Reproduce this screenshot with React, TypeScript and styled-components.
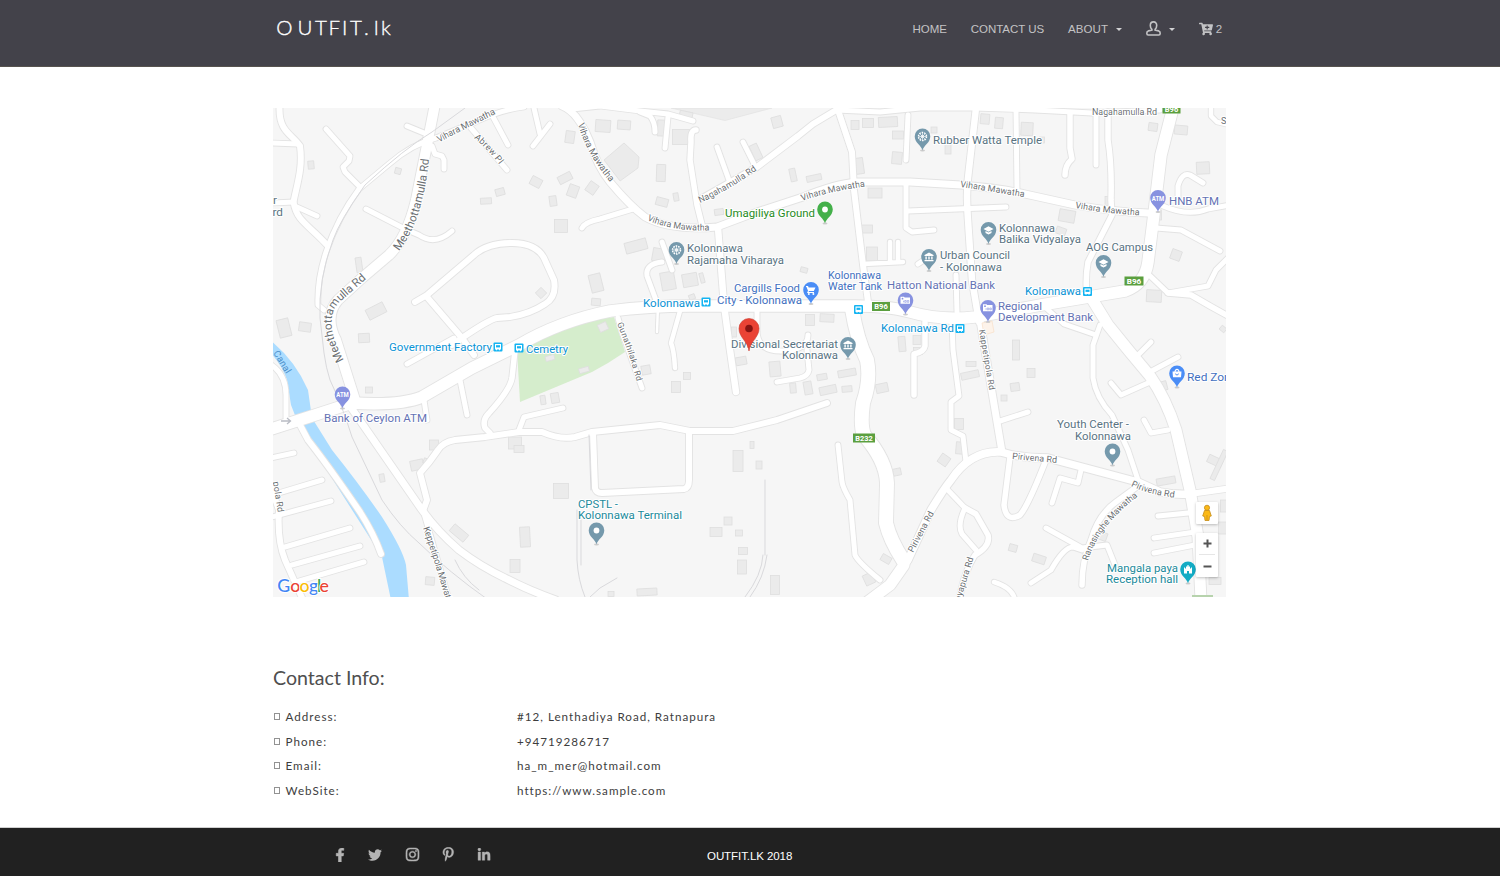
import React from 'react';
import styled, { createGlobalStyle } from 'styled-components';
import { FaFacebookF, FaTwitter, FaInstagram, FaPinterestP, FaLinkedinIn, FaCartPlus } from 'react-icons/fa';

const GlobalStyle = createGlobalStyle`
  *, *::before, *::after { box-sizing: border-box; }
  body { margin: 0; background: #fff; font-family: Lato, sans-serif; color: #444; }
`;

const Page = styled.div`
  display: flex;
  flex-direction: column;
  height: 876px;
  overflow: hidden;
`;

const Header = styled.header`
  flex: none;
  height: 67px;
  background: #43424a;
  border-bottom: 1px solid #57534f;
`;

const Container = styled.div`
  width: 954px;
  margin-left: 273px;
`;

const HeaderRow = styled(Container)`
  display: flex;
  justify-content: space-between;
  align-items: flex-start;
`;

const Logo = styled.svg`
  display: block;
  margin-top: 14px;
  font-family: Lato, sans-serif;
  font-size: 20.5px;
  font-weight: 300;
`;

const Nav = styled.nav`
  display: flex;
  align-items: center;
  padding: 19px 5px 0 0;
`;

const NavLink = styled.a<{ $gap: number; $lift?: number; $tracking?: number }>`
  display: flex;
  align-items: center;
  height: 20px;
  margin-left: ${p => p.$gap}px;
  margin-top: ${p => -(p.$lift ?? 0)}px;
  font: 11.5px/20px 'Liberation Sans', Arial, sans-serif;
  letter-spacing: ${p => p.$tracking ?? -0.05}px;
  color: #c3c3c5;
  white-space: nowrap;
`;

const CartIcon = styled(FaCartPlus)`
  margin-right: 2.5px;
`;

const Caret = styled.span`
  margin-left: 8px;
  margin-top: 2px;
  border: 3px solid transparent;
  border-top-color: #d2d2d4;
  border-bottom: 0;
`;

const Main = styled.main`
  flex: 1;
  padding-top: 41px;
`;

const MapFrame = styled.div`
  position: relative;
  width: 953px;
  height: 489px;
  background: #f6f6f6;
  overflow: hidden;
`;

const MapCanvas = styled.svg`
  display: block;
  font-family: Roboto, sans-serif;
`;

const ControlStack = styled.div`
  position: absolute;
  right: 8px;
  bottom: 20px;
  display: flex;
  flex-direction: column;
  gap: 9px;
`;

const ControlBox = styled.div`
  width: 22px;
  background: #fff;
  border-radius: 1px;
  box-shadow: 0 1px 3px rgba(0, 0, 0, 0.25);
  display: flex;
  flex-direction: column;
  align-items: center;
`;

const ControlButton = styled.button<{ $divided?: boolean }>`
  width: 16px;
  height: 22px;
  padding: 0;
  border: 0;
  border-bottom: ${p => (p.$divided ? '1px solid #e6e6e6' : '0')};
  background: none;
  display: flex;
  align-items: center;
  justify-content: center;
`;

const ContactSection = styled.section`
  padding-top: 67px;
`;

const SectionTitle = styled.h2`
  margin: 0 0 12.6px;
  font-size: 19.6px;
  line-height: 28px;
  font-weight: 400;
  color: #4f4f4f;
`;

const InfoRow = styled.div`
  display: grid;
  grid-template-columns: 244px 1fr;
  height: 24.5px;
  align-items: center;
  font-size: 11.65px;
  letter-spacing: 1px;
  color: #3d3d3d;
`;

const InfoLabel = styled.span`
  display: flex;
  align-items: center;
`;

const GlyphBox = styled.i`
  width: 6px;
  height: 7px;
  margin: 0 5.5px 0 1px;
  border: 1px solid #929292;
`;

const Footer = styled.footer`
  flex: none;
  height: 49px;
  background: #212121;
  border-top: 1px solid #d0d0d0;
`;

const FooterRow = styled(Container)`
  display: flex;
  align-items: center;
  height: 48px;
  padding: 7px 0 0 60px;
`;

const Socials = styled.div`
  display: flex;
  align-items: center;
  width: 374px;
  padding-bottom: 2px;
  color: #b4b4b4;
`;

const SocialLink = styled.a<{ $width: number; $weight?: number }>`
  display: flex;
  justify-content: center;
  width: ${p => p.$width}px;
  svg { stroke-width: ${p => p.$weight ?? 0}; }
`;

const Copyright = styled.span`
  font: 11.55px/16px 'Liberation Sans', Arial, sans-serif;
  letter-spacing: -0.1px;
  color: #fff;
`;

type Road = [string, number];

const roads: Road[] = [
  ['M279.500 108C279 132 292 134 300 146C303 168 297 184 293.500 202C297 222 308 224 327 245', 6],
  ['M272 143L298 144', 5],
  ['M272 203L294 202', 5],
  ['M297 207L317 216', 5],
  ['M326 129L350 156L349 161L343 167L345 172L360 187', 5],
  ['M524 107Q500 110 475 122L436 138Q412 144 389 164L359 189Q338 217 326 252Q317 280 318 305L324 310', 5],
  ['M407 126L424 133', 5],
  ['M432 146L435 154L442 156L444 160V169', 5],
  ['M366 209L405 229L419 235Q435 246 452 231', 5],
  ['M471 128L507 170', 5],
  ['M492 115L508 145', 5],
  ['M534 108L540 134M550 124L533 146', 5],
  ['M415 302L427 295L474 255Q487 243 512 243Q536 243 544 258L554 280Q557 297 545 304Q530 314 510 317L497 318Q490 319 462 338L452 345', 6],
  ['M427 297L462 338L474 355', 6],
  ['M454 338L407 364', 5],
  ['M562 106Q578 112 590 142Q597 166 610 182Q630 206 645 217Q670 231 717 227L757 212L803 197Q835 184 857 182H910L961 185Q1000 188 1025 194L1075 205Q1115 212 1148 213', 7],
  ['M572 109L600 106L640 111L668 114L693 121', 5],
  ['M640 112L650 116Q655 122 655 132', 5],
  ['M668 117L665 148', 5],
  ['M696 130Q690 130 691 142L690 160L697 205L702 225', 5.500],
  ['M717 147L730 183M743 142L756 168', 5],
  ['M697 201L757 167L798 136L813 124L838 109', 6],
  ['M836 110L880 112L920 108H975L1035 110L1092 113L1160 110', 5],
  ['M838 110L852 152L854 190L863 265L868 302', 6],
  ['M908 115L906 160M906 184V228L912 232L934 230', 5],
  ['M863 264L903 262M890 242V262M898 242V262', 4.500],
  ['M582 228Q585 222 600 219L633 209', 5],
  ['M662 242L672 270', 5],
  ['M662 262Q645 264 647 276L657 303', 5],
  ['M658 305L657 332', 2.500],
  ['M718 228L724 305L730 350L736 392', 6.500],
  ['M680 311L671 343Q674 350 675 368', 4.500],
  ['M618 318L622 332L642 388', 5],
  ['M757 312V330Q757 352 783 351Q808 350 808 335M807 350L809 370Q808 376 800 378L777 382', 5],
  ['M838 445L842 482Q843 488 850 500L855 555Q858 562 880 580', 5],
  ['M423 511L427 500L420 473Q430 462 438 450Q443 442 455 440L485 437L519 432H542Q560 440 575 437L592 432L660 425L690 431H733L777 420L827 403', 6],
  ['M593 432L595 488Q596 493 602 493L684 489Q689 488 689 480V431', 6],
  ['M515 350L512 378Q510 390 489 413Q482 420 485 428L490 433', 5.500],
  ['M519 430L524 417L563 408', 5],
  ['M460 380L467 415M424 400L427 420', 5],
  ['M350 406L422 510Q438 532 459 550Q480 566 505 578Q530 591 556 600', 7],
  ['M423 510L449 600', 5],
  ['M300 425L308 440Q330 468 360 512Q374 534 381 554', 6],
  ['M270 364Q286 374 286 395V418', 5],
  ['M271 458L294 453M272 495L322 480M272 517L331 501', 5],
  ['M270 485L279 510Q277 540 285 560L303 600', 6],
  ['M285 547L350 528M292 565L360 546M296 582L364 562', 5],
  ['M976 108L968 178Q966 195 968 220L972 280L979 322', 6.500],
  ['M1016 110L1017 190', 5],
  ['M1070 113V148L1072 159Q1065 165 1065 175', 5.500],
  ['M1096 112V165', 5],
  ['M1108 112V140Q1112 165 1111 200L1112 215L1088 262Q1085 278 1087 300', 5.500],
  ['M908 211L1006 207', 5],
  ['M1163 206Q1188 217 1208 209L1230 205', 5],
  ['M1156 228L1181 230L1220 251', 5],
  ['M1178 200V186Q1182 172 1190 175L1203 183', 5],
  ['M1147 273L1168 293L1208 286L1216 270L1230 256', 5],
  ['M1168 293L1191 295L1210 306L1230 317', 5.500],
  ['M1211 105V116L1217 122L1230 125', 4.500],
  ['M918 264L924 260M956 275L957 312', 5],
  ['M925 322V346Q924 352 914 354V395', 5.500],
  ['M952 322L953 350L959 396L951 402V430L963 436L966 462', 5],
  ['M980 320L985 350L1002 452', 7],
  ['M1000 421L1028 412', 5],
  ['M1046 308L1064 324L1096 335', 5],
  ['M1100 325L1093 345V378Q1096 398 1112 415L1128 450L1138 480', 5],
  ['M1151 342L1137 356M1178 357L1148 373', 5],
  ['M1111 383L1121 395L1148 383', 5],
  ['M1144 420L1151 433L1168 430', 5],
  ['M945 487L965 508Q957 525 962 534L976 550', 5],
  ['M965 508L976 514L988 535Q991 546 975 555Q965 570 959 600', 5.500],
  ['M1010 457L1004 505Q1006 523 1020 515Q1028 506 1046 460', 5.500],
  ['M1081 470L1078 483L1060 478L1052 503', 5],
  ['M1138 486L1116 502Q1098 515 1091 540Q1082 560 1082 585', 5.500],
  ['M1046 528L1082 548L1107 545L1115 565', 5],
  ['M1031 583L1051 570Q1064 547 1073 547L1082 550', 5],
  ['M994 582Q1013 588 1015 600', 4.500],
  ['M1158 516L1188 513M1154 538L1195 532M1154 553L1195 545', 5],
  ['M1190 494L1232 488', 6],
  ['M355 400L336 340Q324 316 338 300L362 278L389 255Q407 238 416 200L427 145L435 104', 10],
  ['M268 430L312 416L352 403Q400 406 422 397L472 368L519 345Q560 321 610 311Q650 306 690 306H855Q890 306 910 312Q941 321 975 317L1041 305L1125 291Q1145 284 1148 262L1153 222L1161 155L1174 104', 11.500],
  ['M1092 299L1108 325Q1128 350 1150 376Q1166 399 1176 430L1190 490L1198 537L1201 600', 11],
  ['M852 309Q857 340 867 360Q871 380 863 403Q860 425 864 435Q886 460 887 483L886 523Q890 540 903 560', 14],
  ['M866 602L890 585L908 560L931 510Q943 490 951 480Q971 450 1001 452Q1020 458 1048 458L1138 482L1160 492Q1175 495 1190 494', 7.500],
  ['M866 603L890 585L904 565', 11],
];

// [centre x, centre y, width, height, rotation]
const buildings: number[][] = [
  [311, 165, 6, 8, -5], [398, 171, 6, 6, 15], [486, 201, 11, 6, -3], [500, 192, 9, 7, -15],
  [536, 182, 11, 9, 28], [565, 178, 14, 8, -27], [573, 191, 10, 12, 20], [553, 201, 7, 10, -8],
  [561, 226, 13, 13, 0], [570, 137, 9, 12, 8], [359, 265, 6, 15, -8], [376, 311, 19, 11, -27],
  [284, 328, 12, 18, -14], [305, 327, 12, 9, 8], [364, 338, 11, 9, -3], [541, 293, 8, 8, 45],
  [592, 188, 10, 11, 35], [603, 126, 15, 12, 4], [624, 125, 13, 9, 4], [661, 128, 7, 16, 2],
  [681, 137, 17, 15, 0], [686, 115, 13, 7, 12], [661, 173, 9, 17, 2], [662, 202, 12, 8, 15],
  [676, 197, 5, 8, -10], [719, 212, 9, 6, -8], [777, 122, 10, 11, -15], [756, 152, 8, 16, -25],
  [793, 175, 6, 13, -12], [814, 178, 15, 6, -12], [636, 246, 22, 11, -15], [659, 255, 13, 13, 10],
  [596, 283, 12, 18, -14], [596, 302, 9, 7, 5], [668, 281, 14, 18, -10], [690, 280, 15, 13, -10],
  [702, 278, 4, 10, -15], [692, 297, 6, 5, -20], [855, 125, 8, 9, 0], [868, 123, 11, 9, 0],
  [888, 122, 19, 10, -3], [898, 135, 11, 8, 0], [897, 158, 10, 12, 5], [859, 166, 9, 16, -8],
  [875, 193, 14, 10, 0], [866, 229, 13, 8, 0], [872, 254, 11, 14, 0], [804, 270, 7, 5, 15],
  [810, 320, 9, 11, 0], [827, 318, 14, 8, 3], [734, 332, 5, 10, 0], [902, 344, 7, 15, -5],
  [985, 119, 9, 10, 5], [999, 123, 8, 11, 5], [1027, 129, 12, 13, 3], [934, 130, 6, 6, 0],
  [948, 149, 6, 10, 0], [1042, 140, 5, 6, 0], [1067, 216, 16, 12, 10], [1061, 231, 10, 7, 20],
  [1108, 201, 6, 9, 0], [1153, 127, 9, 8, 8], [1181, 130, 13, 9, 5], [1203, 168, 13, 12, -3],
  [1158, 215, 7, 10, 0], [1176, 255, 10, 10, 20], [1154, 296, 15, 12, 3], [1223, 329, 6, 5, 40],
  [917, 340, 8, 9, 0], [918, 351, 9, 7, 0], [1016, 350, 7, 20, 0], [971, 364, 10, 5, 0],
  [970, 375, 18, 7, -12], [1031, 373, 8, 9, 0], [1015, 387, 9, 8, -8], [1004, 398, 6, 6, 0],
  [959, 424, 9, 11, 0], [960, 448, 8, 12, 5], [944, 460, 10, 10, 35], [1163, 386, 8, 9, -15],
  [1166, 481, 19, 7, -10], [1102, 536, 10, 8, 20], [1013, 548, 8, 7, 15], [1039, 559, 13, 8, 18],
  [1215, 461, 15, 8, 25], [1219, 465, 5, 32, 25], [1224, 506, 7, 12, 0], [1223, 528, 9, 12, 0],
  [1215, 581, 12, 7, 0], [369, 390, 7, 6, 0], [434, 445, 9, 10, 0], [417, 465, 13, 10, -12],
  [426, 461, 5, 5, 20], [382, 478, 5, 8, -10], [515, 443, 13, 12, 0], [519, 449, 10, 7, 0],
  [561, 491, 15, 15, 0], [525, 537, 10, 20, -3], [459, 533, 18, 9, 40], [515, 566, 10, 13, 0],
  [430, 581, 9, 8, 5], [543, 400, 5, 9, -8], [555, 398, 8, 10, -10], [550, 358, 9, 5, -15],
  [584, 370, 10, 5, -15], [646, 370, 9, 9, -10], [676, 387, 9, 11, 0], [687, 376, 7, 7, 0],
  [741, 361, 11, 8, -10], [775, 369, 11, 15, -5], [793, 388, 6, 10, -5], [808, 388, 8, 13, -10],
  [822, 377, 10, 6, -10], [847, 373, 18, 7, -10], [828, 390, 17, 8, -12], [847, 389, 10, 6, -5],
  [882, 388, 12, 9, -12], [897, 472, 8, 7, -12], [738, 461, 10, 21, 0], [752, 445, 4, 7, 0],
  [759, 465, 6, 8, 0], [716, 532, 12, 9, 0], [728, 521, 8, 8, 0], [739, 533, 7, 6, 0],
  [743, 551, 9, 7, 0], [742, 567, 9, 14, 0], [775, 585, 9, 19, 0], [647, 592, 20, 7, -3],
  [611, 594, 6, 5, 0], [886, 559, 10, 7, 30], [869, 579, 10, 11, -25], [603, 327, 9, 8, -25],
];

const rails = [
  'M465 108L432 132Q405 148 365 185Q340 220 333 240Q318 280 320 318L324 353Q326 368 330 380Q342 405 352 437L382 500Q400 527 419 543Q450 573 487 599',
  'M765 480V555M763 555Q762 575 745 597M767 555Q764 578 750 597',
  'M577 510V560Q578 580 585 597M581 520V565M617 578L600 588L590 597',
  'M589 435L591 490',
  'M455 560Q463 578 479 590',
];

// [text, x, baseline, width, colour]
type PlaceLabel = [string, number, number, number, string];
const SLATE = '#597382';
const TRANSIT = '#0a93d5';
const BANK = '#6472b4';
const SHOP = '#3f70c0';
const TEAL = '#1b8a9b';

const placeLabels: PlaceLabel[] = [
  ['Rubber Watta Temple', 933, 144.300, 109, SLATE],
  ['HNB ATM', 1169, 205.300, 50, BANK],
  ['Kolonnawa', 999, 231.700, 56, SLATE],
  ['Balika Vidyalaya', 999, 243, 82, SLATE],
  ['AOG Campus', 1086, 251.300, 67, SLATE],
  ['Urban Council', 940, 259.300, 70, SLATE],
  ['- Kolonnawa', 940, 270.700, 62, SLATE],
  ['Kolonnawa', 828, 278.700, 53, SHOP],
  ['Water Tank', 828, 290, 54, SHOP],
  ['Hatton National Bank', 887, 288.700, 108, BANK],
  ['Regional', 998, 310, 44, BANK],
  ['Development Bank', 998, 321.300, 95, BANK],
  ['Kolonnawa', 1025, 295.300, 56, TRANSIT],
  ['Kolonnawa Rd', 881, 332, 73, TRANSIT],
  ['Kolonnawa', 643, 306.700, 57, TRANSIT],
  ['Cargills Food', 734, 292.300, 66, SHOP],
  ['City - Kolonnawa', 717, 303.700, 85, SHOP],
  ['Umagiliya Ground', 725, 217, 90, '#278b24'],
  ['Kolonnawa', 687, 252, 56, SLATE],
  ['Rajamaha Viharaya', 687, 263.500, 97, SLATE],
  ['Divisional Secretariat', 731, 347.700, 107, SLATE],
  ['Kolonnawa', 782, 359, 56, SLATE],
  ['Government Factory', 389, 351, 103, TRANSIT],
  ['Cemetry', 526, 352.500, 42, TRANSIT],
  ['Bank of Ceylon ATM', 324, 421.700, 103, BANK],
  ['CPSTL -', 578, 507.500, 40, TEAL],
  ['Kolonnawa Terminal', 578, 518.700, 104, TEAL],
  ['Youth Center -', 1057, 428, 72, SLATE],
  ['Kolonnawa', 1075, 439.700, 56, SLATE],
  ['Red Zone', 1187, 380.700, 50, SHOP],
  ['Mangala paya', 1107, 572, 71, TEAL],
  ['Reception hall', 1106, 583, 72, TEAL],
  ['r', 273, 203.700, 4, SLATE],
  ['rd', 272.500, 215.500, 10.500, SLATE],
];

// [text, path, length, size]
const roadLabels: [string, string, number, number][] = [
  ['Vihara Mawatha', 'M439 142.500Q470 126 508 108', 64, 9.300],
  ['Abrew Pl', 'M474 138Q490 151 504 171', 37, 9],
  ['Meethottamulla Rd', 'M399 251Q424 220 430 150', 98, 11.500],
  ['Meethottamulla Rd', 'M344 360Q320 318 342 300L374 272', 98, 11.500],
  ['Vihara Mawatha', 'M578 124Q587 157 617 190', 67, 9.300],
  ['Vihara Mawatha', 'M647 220Q675 233 720 230', 64, 9],
  ['Vihara Mawatha', 'M802 201Q834 190 876 185', 65, 9],
  ['Nagahamulla Rd', 'M700 203Q730 190 765 164', 66, 9],
  ['Nagahamulla Rd', 'M1092 115L1170 115', 65, 9],
  ['Vihara Mawatha', 'M960 187Q995 192 1040 200', 65, 9],
  ['Vihara Mawatha', 'M1075 208Q1108 214 1150 216', 65, 9],
  ['Gunathilaka Rd', 'M617 324Q628 348 639 390', 61, 8.500],
  ['Kappetipola Rd', 'M979 330L991 400', 61, 8.500],
  ['Pirivena Rd', 'M1012 459L1070 464', 45, 9],
  ['Pirivena Rd', 'M1131 486Q1150 496 1188 499', 45, 9],
  ['Pirivena Rd', 'M913 553L940 502', 45, 9],
  ['Jayapura Rd', 'M959 606L976 550', 50, 9],
  ['Ranasinghe Mawatha', 'M1088 561Q1098 525 1145 491', 83, 9],
  ['Keppetipola Mawatha', 'M423 528Q437 568 450 615', 84, 9.300],
  ['Canal', 'M273 353L291 382', 25, 9.500],
  ['pola Rd', 'M273 482L279 520', 31, 9],
  ['S', 'M1221 124L1230 124', 6, 9],
];

type PinKind = 'wheel' | 'dot' | 'cart' | 'school' | 'civic' | 'atm' | 'cash' | 'bag' | 'castle';
const pins: [number, number, string, PinKind][] = [
  [922.5, 136.500, '#7599ac', 'wheel'],
  [676.5, 250, '#7599ac', 'wheel'],
  [825, 209.500, '#44b04a', 'dot'],
  [811, 290, '#4a8df6', 'cart'],
  [988.5, 230, '#7599ac', 'school'],
  [1103.500, 263, '#7599ac', 'school'],
  [929, 257, '#7599ac', 'civic'],
  [848, 345, '#7599ac', 'civic'],
  [1158, 198, '#8792e0', 'atm'],
  [342.500, 394.500, '#8792e0', 'atm'],
  [905.500, 300.500, '#8792e0', 'cash'],
  [988, 308, '#8792e0', 'cash'],
  [1177, 373.500, '#4a8df6', 'bag'],
  [1188, 569.500, '#13abc4', 'castle'],
  [1112.500, 451.500, '#7599ac', 'dot'],
  [596.500, 530.500, '#7599ac', 'dot'],
];

const PinGlyph = ({ kind }: { kind: PinKind }) => {
  switch (kind) {
    case 'wheel':
      return (
        <g fill="none" stroke="#fff">
          <circle r="4" strokeWidth="1.500" strokeDasharray="1.600 .9" />
          <circle r="1.300" strokeWidth=".8" />
          <path d="M-4 0H4M0-4V4M-2.800-2.800L2.800 2.800M-2.800 2.800L2.800-2.800" strokeWidth=".6" />
        </g>
      );
    case 'dot':
      return <circle r="2.900" fill="#fff" />;
    case 'cart':
      return (
        <g fill="#fff">
          <path d="M-5-4H-3L-2.300-2.500H4.500L2.800 1H-2L-2.500 2H3V3H-4L-3 .8L-4.500-3H-5Z" />
          <circle cx="-2.200" cy="4" r="1" /><circle cx="2.400" cy="4" r="1" />
        </g>
      );
    case 'school':
      return <path d="M-5-1L0-3.800L5-1L0 1.800ZM-3 1V3L0 4.500L3 3V1L0 2.600Z" fill="#fff" />;
    case 'civic':
      return <path d="M-4.500-2L0-4.500L4.500-2V-1H-4.500ZM-3.600-.4H-2.200V2.500H-3.600ZM-.7-.4H.7V2.500H-.7ZM2.200-.4H3.600V2.500H2.200ZM-4.500 3H4.500V4.300H-4.500Z" fill="#fff" />;
    case 'atm':
      return <text y="2.800" textAnchor="middle" fontSize="8" fontWeight="700" fill="#fff" textLength="12.500" lengthAdjust="spacingAndGlyphs">ATM</text>;
    case 'cash':
      return (
        <g>
          <path d="M-5-3.800H-1.500L-.8-3H4.500V3.200H-5Z" fill="#fff" />
          <circle cx="-3" cy="-1.800" r=".9" fill="#8792e0" />
          <path d="M-2 .2V1.800M-.8 0H.7V1.800H-.8ZM1.800 0H3.300V1.800H1.800Z" fill="none" stroke="#8792e0" strokeWidth=".6" />
        </g>
      );
    case 'bag':
      return (
        <g>
          <path d="M-2-1.500C-2-5 2-5 2-1.500" fill="none" stroke="#fff" strokeWidth="1.200" />
          <path d="M-4.500-2H4.500L4 3.800H-4Z" fill="#fff" />
          <path d="M-1.800 .3Q0 3 1.800 .3" fill="none" stroke="#4a8df6" strokeWidth="1" />
        </g>
      );
    case 'castle':
      return <path d="M-4-2H-3V-1H-2V-3H-.6V-4.500H.6V-3H2V-1H3V-2H4V4H1V1.500H-1V4H-4Z" fill="#fff" />;
  }
};

const Pin = ({ x, y, color, kind }: { x: number; y: number; color: string; kind: PinKind }) => (
  <g transform={`translate(${x} ${y})`}>
    <ellipse cy="14" rx="2.500" ry="1" fill="#ccc" />
    <path d="M0 14C-.8 9-7.800 6.500-7.800-.3A7.800 7.800 0 0 1 7.800-.3C7.800 6.500.8 9 0 14Z" fill={color} />
    <PinGlyph kind={kind} />
  </g>
);

const BusStop = ({ x, y }: { x: number; y: number }) => (
  <g transform={`translate(${x} ${y})`}>
    <rect x="-4.500" y="-4.500" width="9" height="9" rx="1" fill="#14b4f2" />
    <path d="M-3-3H3V2.400H2V3.200H1V2.400H-1V3.200H-2V2.400H-3Z" fill="#fff" />
    <path d="M-2-1.800H2V.4H-2Z" fill="#14b4f2" />
  </g>
);

const Shield = ({ x, y, w, text }: { x: number; y: number; w: number; text: string }) => (
  <g transform={`translate(${x} ${y})`}>
    <rect x={-w / 2} y="-4.500" width={w} height="9" fill="#5b9f3f" />
    <text y="2.700" textAnchor="middle" fontSize="7.500" fontWeight="700" fill="#fff" textLength={w - 4.500} lengthAdjust="spacingAndGlyphs">{text}</text>
  </g>
);

const StreetMap = () => (
  <MapCanvas width="953" height="489" viewBox="273 108 953 489" role="img" aria-label="Map">
    <rect x="273" y="108" width="953" height="489" fill="#f6f6f6" />
    <path d="M671 108H772L725 120.500Z" fill="#ececec" stroke="#e2e2e2" strokeWidth=".7" />
    <path d="M517 350Q550 333 592 320L614 317L625 352L608 363L592 372L520 402Z" fill="#d5edcc" />
    <g fill="#ebebeb" stroke="#dedede" strokeWidth=".8">
      {buildings.map(([x, y, w, h, r], i) => (
        <rect key={i} x={x - w / 2} y={y - h / 2} width={w} height={h} transform={`rotate(${r} ${x} ${y})`} />
      ))}
      <path d="M604 160L624 143L639 157L638 168L620 181Z" />
    </g>
    <path d="M270 340Q295 360 308 390L312 418L332 450Q360 485 382 517Q403 550 406 565L409 600H391L382 557L300 428L291 405L287 380Q282 365 270 352Z" fill="#abdcff" />
    <g fill="none" strokeLinecap="round" strokeLinejoin="round">
      {roads.map(([d, w], i) => <path key={i} d={d} stroke="#e3e3e3" strokeWidth={w + 1.800} />)}
      {roads.map(([d, w], i) => <path key={i} d={d} stroke="#fff" strokeWidth={w} />)}
      {rails.map((d, i) => <path key={i} d={d} stroke="#d9d9dc" strokeWidth="1" />)}
    </g>
    <path d="M982 323L992 321L994 332L984 335Z" fill="#fdf3ea" stroke="#f8dfc8" strokeWidth=".7" />
    <path d="M281 421H290M287 418L290.500 421L287 424" fill="none" stroke="#b9bcc4" strokeWidth="1.300" />
    <path d="M1192 596H1213" stroke="#b7d3ad" strokeWidth="2" />
    <g stroke="#fff" strokeWidth="2" paintOrder="stroke" strokeLinejoin="round">
      {roadLabels.map(([text, d, len, size], i) => (
        <React.Fragment key={i}>
          <path id={`street-${i}`} d={d} fill="none" stroke="none" />
          <text fontSize={size} fill={text === 'Canal' ? '#4b8fc9' : '#6b6f73'} strokeOpacity={text === 'Canal' ? 0 : 1}>
            <textPath href={`#street-${i}`} textLength={len}>{text}</textPath>
          </text>
        </React.Fragment>
      ))}
      {placeLabels.map(([text, x, y, len, color], i) => (
        <text key={i} x={x} y={y} fontSize="11.400" fill={color} textLength={len} lengthAdjust="spacingAndGlyphs">{text}</text>
      ))}
    </g>
    <Shield x={1134} y={281} w={19} text="B96" />
    <Shield x={881} y={306.500} w={18} text="B96" />
    <Shield x={864} y={438} w={22} text="B232" />
    <Shield x={1171.500} y={109} w={18} text="B96" />
    <BusStop x={1087.500} y={291.500} />
    <BusStop x={960} y={328.500} />
    <BusStop x={858.500} y={309.500} />
    <BusStop x={706} y={302} />
    <BusStop x={498} y={347} />
    <BusStop x={519} y={348} />
    {pins.map(([x, y, color, kind], i) => <Pin key={i} x={x} y={y} color={color} kind={kind} />)}
    <g transform="translate(749 328.500)">
      <path d="M0 22.500C-1 13-10 9-10 0A10 10 0 0 1 10 0C10 9 1 13 0 22.500Z" fill="#ea4335" stroke="#c9382c" strokeWidth=".6" />
      <circle r="3.800" fill="#871412" />
    </g>
    <g fontFamily="Lato, sans-serif" fontSize="17.800" fontWeight="500" stroke="#fff" strokeWidth="2" paintOrder="stroke">
      <text y="591.500" x="277.200 290.300 299.500 309 317 319.500" fill="#4285f4">G<tspan fill="#ea4335">o</tspan><tspan fill="#fbbc05">o</tspan>g<tspan fill="#34a853">l</tspan><tspan fill="#ea4335">e</tspan></text>
    </g>
  </MapCanvas>
);

const Pegman = () => (
  <svg width="12" height="18" viewBox="0 0 12 18">
    <path d="M3.500 6.500H8.500L10.300 12L8.500 12.500L8 16.500H4L3.500 12.500L1.700 12Z" fill="#fbb917" stroke="#c48b18" strokeWidth=".8" />
    <path d="M6 11V16" stroke="#c48b18" strokeWidth=".7" />
    <circle cx="6" cy="3.800" r="2.600" fill="#fbb917" stroke="#c48b18" strokeWidth=".8" />
  </svg>
);

const contactRows = [
  ['Address:', '#12, Lenthadiya Road, Ratnapura'],
  ['Phone:', '+94719286717'],
  ['Email:', 'ha_m_mer@hotmail.com'],
  ['WebSite:', 'https://www.sample.com'],
];

export default function App() {
  return (
    <Page>
      <GlobalStyle />
      <Header>
        <HeaderRow>
          <Logo width="130" height="28">
            <text y="21.300" x="3.200 24.500 42 55.500 69 77 91 101 108" fill="#fff" stroke="#fff" strokeWidth=".35">OUTFIT.lk</text>
          </Logo>
          <Nav>
            <NavLink $gap={0}>HOME</NavLink>
            <NavLink $gap={24}>CONTACT US</NavLink>
            <NavLink $gap={24} $lift={1} $tracking={0.1}>ABOUT<Caret /></NavLink>
            <NavLink $gap={24} $lift={1}>
              <svg width="15" height="15" viewBox="0 0 15 15" fill="none" stroke="#c3c3c5" strokeWidth="1.600">
                <path d="M7.500 .9C5.300 .9 4.300 2.400 4.300 4.500C4.300 6.300 5 7.600 5.900 8.400V9.200L2.300 9.900Q.8 10.400 .8 12.200Q.8 14 2.200 14H12.800Q14.200 14 14.200 12.200Q14.200 10.400 12.700 9.900L9.100 9.200V8.400C10 7.600 10.700 6.300 10.700 4.500C10.700 2.400 9.700 .9 7.500 .9Z" />
              </svg>
              <Caret />
            </NavLink>
            <NavLink $gap={24}><CartIcon size={14} />2</NavLink>
          </Nav>
        </HeaderRow>
      </Header>
      <Main>
        <Container>
          <MapFrame>
            <StreetMap />
            <ControlStack>
              <ControlBox>
                <ControlButton aria-label="Street view"><Pegman /></ControlButton>
              </ControlBox>
              <ControlBox>
                <ControlButton $divided aria-label="Zoom in">
                  <svg width="9" height="9"><path d="M.5 4.500H8.500M4.500 .5V8.500" stroke="#555" strokeWidth="2" /></svg>
                </ControlButton>
                <ControlButton aria-label="Zoom out">
                  <svg width="9" height="9"><path d="M.5 4.500H8.500" stroke="#555" strokeWidth="2" /></svg>
                </ControlButton>
              </ControlBox>
            </ControlStack>
          </MapFrame>
          <ContactSection>
            <SectionTitle>Contact Info:</SectionTitle>
            {contactRows.map(([label, value]) => (
              <InfoRow key={label}>
                <InfoLabel><GlyphBox />{label}</InfoLabel>
                <span>{value}</span>
              </InfoRow>
            ))}
          </ContactSection>
        </Container>
      </Main>
      <Footer>
        <FooterRow>
          <Socials>
            <SocialLink $width={14} $weight={22}><FaFacebookF size={14} /></SocialLink>
            <SocialLink $width={56}><FaTwitter size={14} /></SocialLink>
            <SocialLink $width={19} $weight={16}><FaInstagram size={15} /></SocialLink>
            <SocialLink $width={52} $weight={10}><FaPinterestP size={14.5} /></SocialLink>
            <SocialLink $width={20} $weight={14}><FaLinkedinIn size={14} /></SocialLink>
          </Socials>
          <Copyright>OUTFIT.LK 2018</Copyright>
        </FooterRow>
      </Footer>
    </Page>
  );
}
